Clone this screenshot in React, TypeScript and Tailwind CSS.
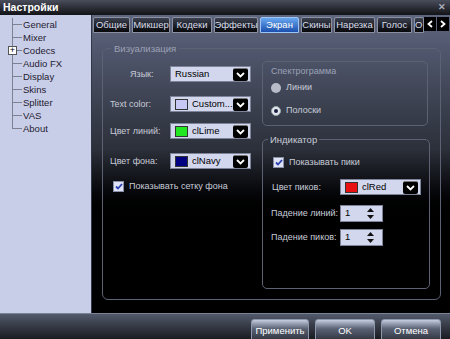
import { ReactNode } from "react";

const treeItems = ["General", "Mixer", "Codecs", "Audio FX", "Display", "Skins", "Splitter", "VAS", "About"];

const tabs = [
  { label: "Общие", w: "w-[37px]" },
  { label: "Микшер", w: "w-[38px]" },
  { label: "Кодеки", w: "w-[40px]" },
  { label: "Эффекты", w: "w-[44px]" },
  { label: "Экран", w: "w-[39px]", active: true },
  { label: "Скины", w: "w-[31px]" },
  { label: "Нарезка", w: "w-[41px]" },
  { label: "Голос", w: "w-[35px]" },
  { label: "О", w: "min-w-0 flex-1", cut: true },
];

function ArrowBtn() {
  return (
    <span className="mr-[2px] flex h-[13px] w-[15px] items-center justify-center rounded-[2px] border-t border-[#777] bg-black">
      <svg width="9" height="6" viewBox="0 0 9 6">
        <path d="M1 1 L4.5 4.5 L8 1" stroke="#fff" strokeWidth="1.8" fill="none" />
      </svg>
    </span>
  );
}

function Combo({ swatch, text }: { swatch?: string; text: string }) {
  return (
    <div className="flex h-[16px] w-[81px] items-center border border-[#7d849a] bg-[#d3d7ee]">
      {swatch ? <span className={`ml-[4px] h-[11px] w-[13px] shrink-0 border border-[#333] ${swatch}`} /> : null}
      <span className="ml-[4px] flex-1 whitespace-nowrap text-[9.5px] leading-none text-black">{text}</span>
      <ArrowBtn />
    </div>
  );
}

function Spin() {
  return (
    <div className="flex h-[17px] w-[43px] items-center border border-[#7d849a] bg-[#d3d7ee]">
      <span className="ml-[4px] flex-1 text-[9.5px] leading-none text-black">1</span>
      <svg className="mr-[8px]" width="7" height="11" viewBox="0 0 7 11">
        <path d="M3.5 0 L7 4 L0 4 Z" fill="#111" />
        <path d="M0 7 L7 7 L3.5 11 Z" fill="#111" />
      </svg>
    </div>
  );
}

function Check({ children }: { children: ReactNode }) {
  return (
    <div className="flex items-center">
      <span className="flex h-[11px] w-[11px] items-center justify-center border border-[#8890a8] bg-[#dfe3f5]">
        <svg width="8" height="7" viewBox="0 0 8 7">
          <path d="M1 3.5 L3 5.5 L7 1" stroke="#2a3fb0" strokeWidth="1.8" fill="none" />
        </svg>
      </span>
      <span className="ml-[5px] whitespace-nowrap text-[9px] leading-[13px] text-[#c8ccd8]">{children}</span>
    </div>
  );
}

function Radio({ on, children }: { on?: boolean; children: ReactNode }) {
  return (
    <div className="flex items-center">
      <span
        className={`flex h-[10px] w-[10px] items-center justify-center rounded-full ${
          on ? "border border-[#9aa] bg-[#e6e8f0]" : "bg-[#b8bcc8]"
        }`}
      >
        {on ? <span className="h-[4px] w-[4px] rounded-full bg-[#1a2040]" /> : null}
      </span>
      <span className="ml-[5px] text-[9px] leading-[13px] text-[#c8ccd8]">{children}</span>
    </div>
  );
}

function Row({ label, pad, children }: { label: string; pad: string; children: ReactNode }) {
  return (
    <div className="flex h-[16px] items-center">
      <span className={`shrink-0 whitespace-nowrap text-[9px] leading-none text-[#c8ccd8] ${pad}`}>{label}</span>
      {children}
    </div>
  );
}

export default function App() {
  return (
    <div className="flex h-[339px] w-[450px] flex-col overflow-hidden bg-black font-['Liberation_Sans',sans-serif]">
      {/* title bar */}
      <div className="flex h-[15px] shrink-0 items-center justify-between bg-linear-to-b from-[#4a4e5c] to-[#131418] pl-[3px] pr-[4px]">
        <span className="text-[10.5px] font-bold leading-none text-white">Настройки</span>
        <span className="text-[9px] font-bold leading-none text-[#a8acb8]">✕</span>
      </div>

      <div className="flex h-[298px] shrink-0">
        {/* tree */}
        <div className="w-[92px] shrink-0 border-r border-[#333846] bg-[#c9cee8] pt-[3px]">
          <div className="ml-[12px]">
            {treeItems.map((t, i) => (
              <div key={t} className="relative flex h-[13px] items-center">
                <div className="flex h-[13px] w-[10px] flex-col">
                  <span className="h-[7px] border-b border-l border-[#7c8194]" />
                  <span className={`flex-1 ${i < treeItems.length - 1 ? "border-l border-[#7c8194]" : ""}`} />
                </div>
                {t === "Codecs" ? (
                  <span className="absolute left-[-4px] top-[2px] flex h-[9px] w-[9px] items-center justify-center border border-[#555] bg-white text-[9px] leading-none text-black">
                    +
                  </span>
                ) : null}
                <span className="ml-[1px] text-[9.5px] leading-none text-[#1e2030]">{t}</span>
              </div>
            ))}
          </div>
        </div>

        {/* right side */}
        <div className="flex min-w-0 flex-1 flex-col bg-linear-to-b from-[#5e6680] via-[#2c303a] via-45% to-black to-70%">
          {/* tabs */}
          <div className="mt-[2px] flex h-[16px] pl-[1px]">
            <div className="flex min-w-0 flex-1 gap-[2px] overflow-hidden">
              {tabs.map((t) => (
                <div
                  key={t.label}
                  className={`flex h-[16px] items-center rounded-t-[2px] border text-[9.5px] leading-none ${t.w} ${
                    t.cut ? "justify-start" : "shrink-0 justify-center"
                  } ${
                    t.active
                      ? "border-[#9cc4f4] bg-linear-to-b from-[#6aa8f0] to-[#1d4fae] text-white"
                      : "border-[#8a90a0] bg-linear-to-b from-[#3c4150] to-[#07080b] text-[#d8dce8]"
                  }`}
                >
                  {t.label}
                </div>
              ))}
            </div>
            <div className="flex shrink-0 gap-[1px] pr-[1px]">
              <span className="flex h-[14px] w-[12px] items-center justify-center bg-black">
                <svg width="6" height="8" viewBox="0 0 6 8">
                  <path d="M5 1 L1.5 4 L5 7" stroke="#fff" strokeWidth="1.8" fill="none" />
                </svg>
              </span>
              <span className="flex h-[14px] w-[12px] items-center justify-center bg-black">
                <svg width="6" height="8" viewBox="0 0 6 8">
                  <path d="M1 1 L4.5 4 L1 7" stroke="#fff" strokeWidth="1.8" fill="none" />
                </svg>
              </span>
            </div>
          </div>

          {/* Визуализация */}
          <fieldset className="ml-[10px] mt-[9px] h-[258px] w-[339px] rounded-[6px] border border-[#5c6274]">
            <legend className="ml-[8px] px-[3px] text-[9.5px] leading-[13px] text-[#9ca2b6]">Визуализация</legend>
            <div className="flex">
              <div className="w-[159px] shrink-0">
                <div className="mt-[11px]">
                  <Row label="Язык:" pad="w-[67px] pl-[27px]">
                    <Combo text="Russian" />
                  </Row>
                </div>
                <div className="mt-[14px]">
                  <Row label="Text color:" pad="w-[67px] pl-[7px]">
                    <Combo swatch="bg-[#c8c8f4]" text="Custom..." />
                  </Row>
                </div>
                <div className="mt-[11px]">
                  <Row label="Цвет линий:" pad="w-[67px] pl-[7px]">
                    <Combo swatch="bg-[#22e622]" text="clLime" />
                  </Row>
                </div>
                <div className="mt-[14px]">
                  <Row label="Цвет фона:" pad="w-[67px] pl-[7px]">
                    <Combo swatch="bg-[#000080]" text="clNavy" />
                  </Row>
                </div>
                <div className="mt-[11px] pl-[10px]">
                  <Check>Показывать сетку фона</Check>
                </div>
              </div>

              <div className="w-[168px] shrink-0">
                <div className="mt-[6px] h-[65px] w-[166px] rounded-[5px] border border-[#5c6274] pl-[8px] pt-[3px]">
                  <div className="text-[9px] leading-[13px] text-[#9ca2b6]">Спектрограмма</div>
                  <div className="mt-[3px]">
                    <Radio>Линии</Radio>
                  </div>
                  <div className="mt-[10px]">
                    <Radio on>Полоски</Radio>
                  </div>
                </div>

                <fieldset className="mt-[7px] h-[156px] w-[168px] rounded-[5px] border border-[#5c6274]">
                  <legend className="ml-[5px] px-[2px] text-[9.5px] leading-[13px] text-[#c8ccd8]">Индикатор</legend>
                  <div className="mt-[10px] pl-[10px]">
                    <Check>Показывать пики</Check>
                  </div>
                  <div className="mt-[10px]">
                    <Row label="Цвет пиков:" pad="w-[77px] pl-[9px]">
                      <Combo swatch="bg-[#e81010]" text="clRed" />
                    </Row>
                  </div>
                  <div className="mt-[10px]">
                    <Row label="Падение линий:" pad="w-[77px] pl-[8px]">
                      <Spin />
                    </Row>
                  </div>
                  <div className="mt-[8px]">
                    <Row label="Падение пиков:" pad="w-[77px] pl-[8px]">
                      <Spin />
                    </Row>
                  </div>
                </fieldset>
              </div>
            </div>
          </fieldset>
        </div>
      </div>

      {/* bottom bar */}
      <div className="flex flex-1 justify-end gap-[6px] border-t border-[#7a8296] bg-linear-to-b from-[#535a6c] to-[#121317] pr-[9px] pt-[5px]">
        {["Применить", "OK", "Отмена"].map((b, i) => (
          <div
            key={b}
            className={`flex h-[24px] items-center justify-center rounded-t-[3px] border border-[#8e98ac] bg-linear-to-b from-[#c4cee0] via-[#5a6274] via-40% to-[#2a2e38] text-[9.5px] leading-none text-white ${
              i === 0 ? "w-[58px]" : "w-[60px]"
            }`}
          >
            {b}
          </div>
        ))}
      </div>
    </div>
  );
}
